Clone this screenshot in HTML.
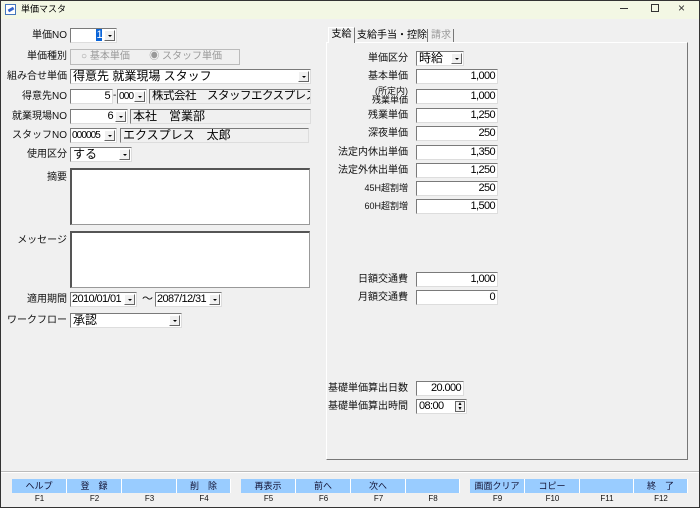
<!DOCTYPE html>
<html><head><meta charset="utf-8"><style>
*{box-sizing:border-box;margin:0;padding:0}
body{width:700px;height:508px;overflow:hidden;background:#f0f0f0;font-family:"Liberation Sans","Noto Sans CJK JP",sans-serif;font-size:11px;color:#000;position:relative}
.a{position:absolute;white-space:nowrap}
.frame{position:absolute;left:0;top:0;width:700px;height:508px;border:1px solid #333;pointer-events:none}
.title{position:absolute;left:0;top:0;width:700px;height:19px;background:#f3f7e4}
.lbl{position:absolute;text-align:right;font-size:10px;color:#111;line-height:15px;white-space:nowrap}
.in{position:absolute;background:#fff;border:1px solid #7a7a7a;border-right-color:#ddd;border-bottom-color:#ddd;height:15px;line-height:13px;font-size:12px;padding:0 2px;white-space:nowrap;overflow:hidden}
.n{font-size:11px;letter-spacing:-0.6px}
.cb{padding-right:14px}
.ro{background:#f0f0f0}
.r{text-align:right}
.dd{position:absolute;right:1px;top:1px;width:11px;height:11px;background:#f0f0f0;border:1px solid #fff;border-right-color:#666;border-bottom-color:#666}
.dd:after{content:"";position:absolute;left:3px;top:4px;border-left:2px solid transparent;border-right:2px solid transparent;border-top:2px solid #000}
.ta{position:absolute;background:#fff;border:1px solid #999;border-top:2px solid #555;border-left:2px solid #555}
.btn{position:absolute;top:479px;height:14px;background:#99ccff;border-right:1px solid #fff;font-size:9px;text-align:center;line-height:14px;color:#113}
.fk{position:absolute;top:494px;font-size:8px;text-align:center;line-height:10px;color:#111}
</style></head><body>
<div class="title"></div>
<div class="a" style="left:5px;top:4px;width:11px;height:11px;border:1px solid #4477bb;background:#fff"><div style="position:absolute;left:2px;top:3px;width:6px;height:3px;background:#3366cc;transform:rotate(-30deg)"></div></div>
<div class="a" style="left:21px;top:3px;font-size:9px;line-height:12px">単価マスタ</div>
<div class="a" style="left:620px;top:8px;width:8px;border-top:1px solid #333"></div>
<div class="a" style="left:651px;top:4px;width:8px;height:8px;border:1px solid #333"></div>
<div class="a" style="left:678px;top:1px;font-size:12px;line-height:14px;color:#333">×</div>

<div class="lbl" style="left:0;width:67px;top:28px">単価NO</div>
<div class="lbl" style="left:0;width:67px;top:49px">単価種別</div>
<div class="lbl" style="left:0;width:67px;top:69px">組み合せ単価</div>
<div class="lbl" style="left:0;width:67px;top:89px">得意先NO</div>
<div class="lbl" style="left:0;width:67px;top:109px">就業現場NO</div>
<div class="lbl" style="left:0;width:67px;top:128px">スタッフNO</div>
<div class="lbl" style="left:0;width:67px;top:147px">使用区分</div>
<div class="lbl" style="left:0;width:67px;top:170px">摘要</div>
<div class="lbl" style="left:0;width:67px;top:233px">メッセージ</div>
<div class="lbl" style="left:0;width:67px;top:292px">適用期間</div>
<div class="lbl" style="left:0;width:67px;top:313px">ワークフロー</div>

<div class="in r n cb" style="left:70px;top:28px;width:47px"><span style="background:#0a64d8;color:#fff">1</span><div class="dd"></div></div>
<div class="a" style="left:70px;top:49px;width:170px;height:16px;border:1px solid #bbb;font-size:10px;color:#999;line-height:14px;padding-left:10px">○ 基本単価&nbsp;&nbsp;&nbsp;&nbsp;&nbsp;&nbsp; ◉ スタッフ単価</div>
<div class="in cb" style="left:70px;top:69px;width:241px">得意先 就業現場 スタッフ<div class="dd"></div></div>
<div class="in r n" style="left:70px;top:89px;width:43px">5</div>
<div class="a" style="left:113px;top:88px;line-height:15px;font-size:10px">-</div>
<div class="in n" style="left:117px;top:89px;width:30px;padding:0 0 0 1px;font-size:10px;letter-spacing:-0.8px">000<div class="dd"></div></div>
<div class="in ro" style="left:149px;top:89px;width:162px;font-size:11.5px;letter-spacing:-0.5px">株式会社　スタッフエクスプレス</div>
<div class="in r n cb" style="left:70px;top:109px;width:58px">6<div class="dd"></div></div>
<div class="in ro" style="left:130px;top:109px;width:181px">本社　営業部</div>
<div class="in n" style="left:70px;top:128px;width:47px;padding:0 0 0 1px;font-size:10px;letter-spacing:-0.9px">000005<div class="dd"></div></div>
<div class="in ro" style="left:120px;top:128px;width:189px">エクスプレス　太郎</div>
<div class="in cb" style="left:70px;top:147px;width:62px">する<div class="dd"></div></div>
<div class="ta" style="left:70px;top:168px;width:240px;height:57px"></div>
<div class="ta" style="left:70px;top:231px;width:240px;height:57px"></div>
<div class="in n cb" style="left:70px;top:292px;width:67px;padding-left:1px">2010/01/01<div class="dd"></div></div>
<div class="a" style="left:142px;top:292px;line-height:15px">〜</div>
<div class="in n cb" style="left:155px;top:292px;width:67px;padding-left:1px">2087/12/31<div class="dd"></div></div>
<div class="in cb" style="left:70px;top:313px;width:112px">承認<div class="dd"></div></div>

<div class="a" style="left:326px;top:42px;width:362px;height:418px;border:1px solid #fff;border-right-color:#777;border-bottom-color:#777"></div>
<div class="a" style="left:328px;top:27px;width:27px;height:16px;background:#f0f0f0;border:1px solid #fff;border-bottom:none;border-right-color:#777;font-size:10px;line-height:14px;text-align:center">支給</div>
<div class="a" style="left:357px;top:29px;font-size:10px;line-height:13px">支給手当・控除</div>
<div class="a" style="left:427px;top:29px;height:13px;border-left:1px solid #777"></div>
<div class="a" style="left:431px;top:29px;font-size:10px;line-height:13px;color:#999">請求</div>
<div class="a" style="left:453px;top:29px;height:13px;border-left:1px solid #777"></div>

<div class="lbl" style="left:320px;width:88px;top:51px">単価区分</div>
<div class="lbl" style="left:320px;width:88px;top:69px">基本単価</div>
<div class="lbl" style="left:320px;width:88px;top:87px;line-height:9px;font-size:9px">(所定内)<br>残業単価</div>
<div class="lbl" style="left:320px;width:88px;top:108px">残業単価</div>
<div class="lbl" style="left:320px;width:88px;top:126px">深夜単価</div>
<div class="lbl" style="left:320px;width:88px;top:145px">法定内休出単価</div>
<div class="lbl" style="left:320px;width:88px;top:163px">法定外休出単価</div>
<div class="lbl" style="left:320px;width:88px;top:181px;font-size:9px">45H超割増</div>
<div class="lbl" style="left:320px;width:88px;top:199px;font-size:9px">60H超割増</div>
<div class="lbl" style="left:320px;width:88px;top:272px">日額交通費</div>
<div class="lbl" style="left:320px;width:88px;top:290px">月額交通費</div>
<div class="lbl" style="left:320px;width:88px;top:381px">基礎単価算出日数</div>
<div class="lbl" style="left:320px;width:88px;top:399px">基礎単価算出時間</div>

<div class="in cb" style="left:416px;top:51px;width:48px">時給<div class="dd"></div></div>
<div class="in r n" style="left:416px;top:69px;width:82px">1,000</div>
<div class="in r n" style="left:416px;top:89px;width:82px">1,000</div>
<div class="in r n" style="left:416px;top:108px;width:82px">1,250</div>
<div class="in r n" style="left:416px;top:126px;width:82px">250</div>
<div class="in r n" style="left:416px;top:145px;width:82px">1,350</div>
<div class="in r n" style="left:416px;top:163px;width:82px">1,250</div>
<div class="in r n" style="left:416px;top:181px;width:82px">250</div>
<div class="in r n" style="left:416px;top:199px;width:82px">1,500</div>
<div class="in r n" style="left:416px;top:272px;width:82px">1,000</div>
<div class="in r n" style="left:416px;top:290px;width:82px">0</div>
<div class="in r n" style="left:416px;top:381px;width:48px">20.000</div>
<div class="in n" style="left:416px;top:399px;width:51px">08:00<div class="a" style="right:1px;top:1px;width:10px;height:11px;border:1px solid #666;background:#f0f0f0;font-size:6px;line-height:5px;text-align:center;letter-spacing:0">▴<br>▾</div></div>

<div class="a" style="left:1px;top:471px;width:698px;border-top:1px solid #bbb;border-bottom:1px solid #fff"></div>
<div class="btn" style="left:12px;width:55px">ヘルプ</div>
<div class="btn" style="left:67px;width:55px">登　録</div>
<div class="btn" style="left:122px;width:55px"></div>
<div class="btn" style="left:177px;width:54px">削　除</div>
<div class="btn" style="left:241px;width:55px">再表示</div>
<div class="btn" style="left:296px;width:55px">前へ</div>
<div class="btn" style="left:351px;width:55px">次へ</div>
<div class="btn" style="left:406px;width:54px"></div>
<div class="btn" style="left:470px;width:55px">画面クリア</div>
<div class="btn" style="left:525px;width:55px">コピー</div>
<div class="btn" style="left:580px;width:54px"></div>
<div class="btn" style="left:634px;width:54px">終　了</div>
<div class="fk" style="left:12px;width:55px">F1</div>
<div class="fk" style="left:67px;width:55px">F2</div>
<div class="fk" style="left:122px;width:55px">F3</div>
<div class="fk" style="left:177px;width:54px">F4</div>
<div class="fk" style="left:241px;width:55px">F5</div>
<div class="fk" style="left:296px;width:55px">F6</div>
<div class="fk" style="left:351px;width:55px">F7</div>
<div class="fk" style="left:406px;width:54px">F8</div>
<div class="fk" style="left:470px;width:55px">F9</div>
<div class="fk" style="left:525px;width:55px">F10</div>
<div class="fk" style="left:580px;width:54px">F11</div>
<div class="fk" style="left:634px;width:54px">F12</div>
<div class="frame"></div>
</body></html>
